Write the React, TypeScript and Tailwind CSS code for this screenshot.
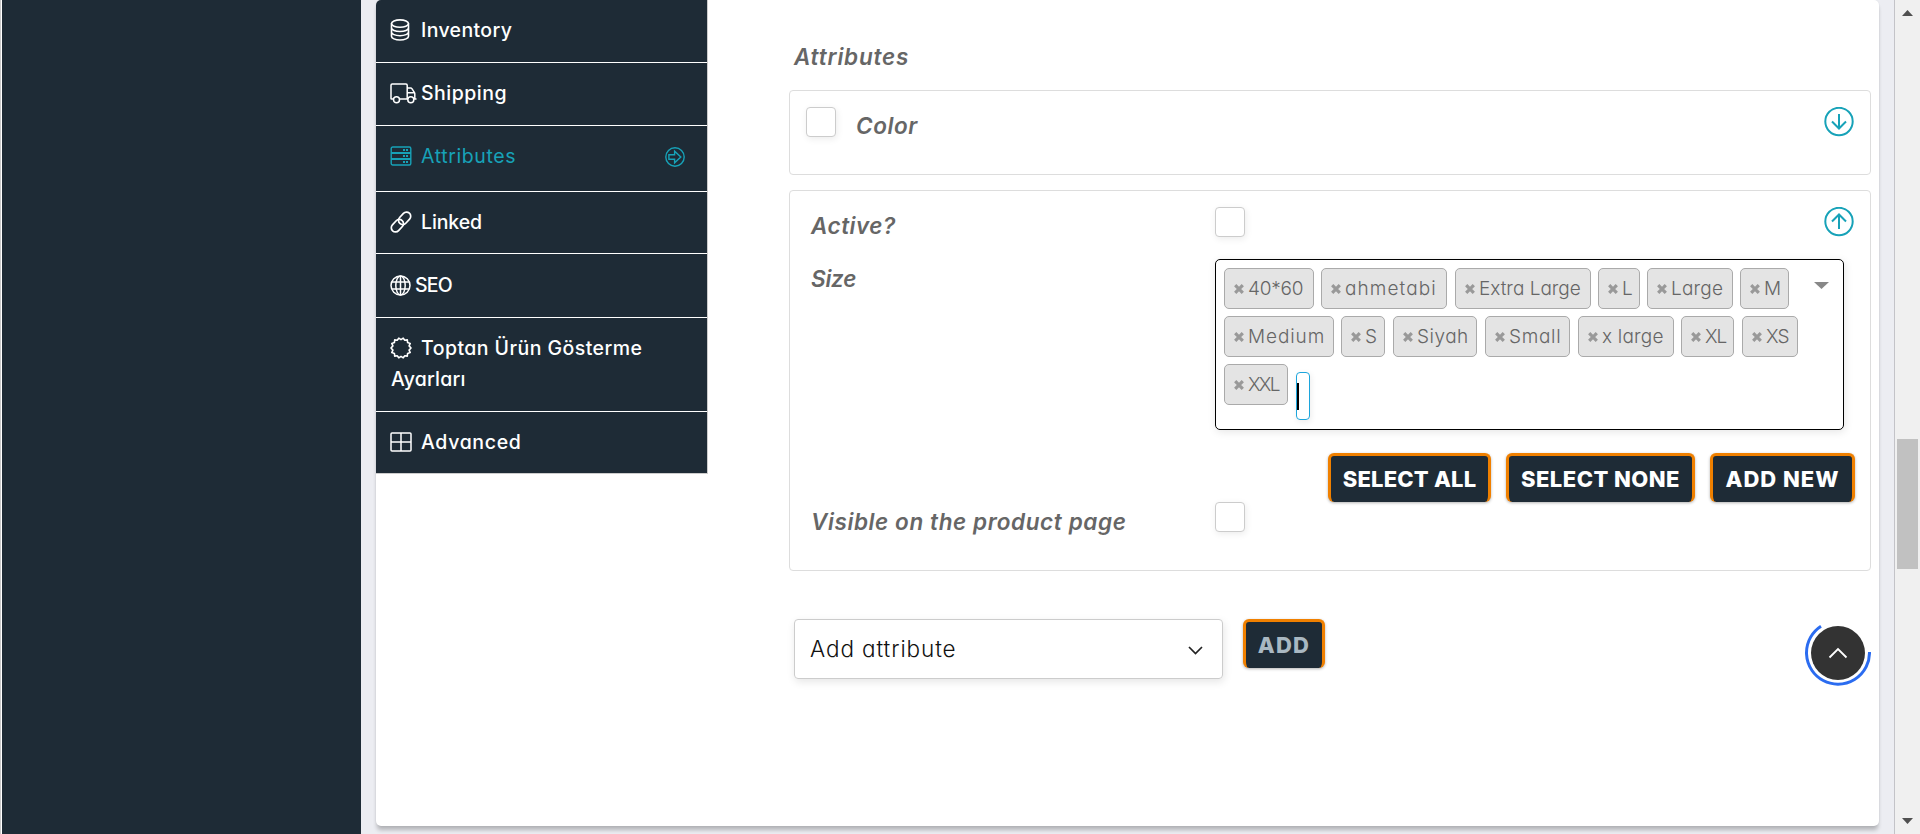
import React from "react";

const icon = "shrink-0 fill-none stroke-current";

function DatabaseIcon() {
  return (
    <svg className={icon} width="20" height="22" viewBox="0 0 20 22" strokeWidth="1.600">
      <ellipse cx="10" cy="4.600" rx="8.500" ry="3.700" />
      <path d="M1.500 4.600v12.600c0 2.100 3.700 3.800 8.500 3.800s8.500-1.700 8.500-3.800v-12.600M1.500 8.800c0 2.100 3.700 3.700 8.500 3.700s8.500-1.600 8.500-3.700M1.500 13c0 2.100 3.700 3.700 8.500 3.700s8.500-1.600 8.500-3.700" />
    </svg>
  );
}

function TruckIcon() {
  return (
    <svg className={icon} width="27" height="21" viewBox="0 0 27 21" strokeWidth="1.500">
      <path d="M3.500 16H1.600C1.200 16 1 15.800 1 15.400V2.200C1 1.500 1.400 1 2.200 1H16c.7 0 1.200.5 1.200 1.200V16H9.500M17.200 5h3.500c.5 0 .9.200 1.200.6l2.600 4c.200.3.300.7.300 1.100V16M17.200 9.700h7.400M23.800 16H26.500" />
      <circle cx="6.500" cy="16.800" r="3" />
      <circle cx="20.800" cy="16.800" r="3" />
    </svg>
  );
}

function ServerIcon() {
  return (
    <svg className={icon} width="22" height="20" viewBox="0 0 22 20" strokeWidth="1.400">
      <rect x="1.200" y="1" width="19.600" height="18" rx="1.500" />
      <path d="M1 7h20M1 13h20" strokeWidth="1.800" />
      <path d="M13 4h2M16 4h2M13 10h2M16 10h2M13 16h2M16 16h2" strokeWidth="2" />
    </svg>
  );
}

function LinkIcon() {
  return (
    <svg className={icon} width="22" height="22" viewBox="0 0 22 22" strokeWidth="1.700">
      <rect x="-7" y="-4.200" width="14" height="8.400" rx="4.200" transform="translate(14.600 7.300) rotate(-47)" />
      <rect x="-7" y="-4.200" width="14" height="8.400" rx="4.200" transform="translate(7.400 14.700) rotate(-47)" />
    </svg>
  );
}

function GlobeIcon() {
  return (
    <svg className={icon} width="21" height="21" viewBox="0 0 21 21" strokeWidth="1.500">
      <circle cx="10.500" cy="10.500" r="9.500" />
      <ellipse cx="10.500" cy="10.500" rx="4.700" ry="9.500" />
      <path d="M10.500 1v19M2 7h17M2 14h17" />
    </svg>
  );
}

function BadgeIcon() {
  return (
    <svg className={icon} width="22" height="22" viewBox="0 0 22 22" strokeWidth="1.600">
      <path d="M11 2.600L13.200 1.200L14.800 3.300L17.300 2.900L17.600 5.600L20.200 6.400L19.100 8.900L21 11L19.100 13.100L20.200 15.600L17.600 16.400L17.300 19.100L14.800 18.700L13.200 20.800L11 19.400L8.800 20.800L7.200 18.700L4.700 19.100L4.400 16.400L1.800 15.600L2.900 13.100L1 11L2.900 8.900L1.800 6.400L4.400 5.600L4.700 2.900L7.200 3.300L8.800 1.200Z" strokeLinejoin="round" />
    </svg>
  );
}

function GridIcon() {
  return (
    <svg className={icon} width="22" height="20" viewBox="0 0 22 20" strokeWidth="1.500">
      <rect x="1" y="1" width="20" height="18" rx="1" />
      <path d="M11 1v18M1 10h20" />
    </svg>
  );
}

function CircleArrowRight() {
  return (
    <svg className={icon} width="20" height="20" viewBox="0 0 20 20" strokeWidth="1.400">
      <circle cx="10" cy="10" r="9.200" />
      <path d="M3.900 7.800H9.600V4.200L15.800 10L9.600 15.800V12.200H3.900Z" />
    </svg>
  );
}

function CircleArrow({ up }: { up?: boolean }) {
  return (
    <svg className="size-[30px] shrink-0 fill-none stroke-[#17a2b8]" viewBox="0 0 30 30" strokeWidth="2">
      <circle cx="15" cy="14.500" r="13.700" />
      <path d={up ? "M15 22V7.500M8 14.500L15 7.500L22 14.500" : "M15 7V21.500M8 14.500L15 21.500L22 14.500"} />
    </svg>
  );
}

type Tab = { label: string; height: string; gap: string; spacing: string; icon: React.ReactNode };

const tabs: Tab[] = [
  { label: "Inventory", height: "h-[62px]", gap: "w-[31px]", spacing: "tracking-[0.35px]", icon: <DatabaseIcon /> },
  { label: "Shipping", height: "h-[62px]", gap: "w-[31px]", spacing: "tracking-[0.5px]", icon: <TruckIcon /> },
  { label: "Attributes", height: "h-[65px]", gap: "w-[31px]", spacing: "tracking-[0.6px]", icon: <ServerIcon /> },
  { label: "Linked", height: "h-[61px]", gap: "w-[31px]", spacing: "tracking-[-0.1px]", icon: <LinkIcon /> },
  { label: "SEO", height: "h-[63px]", gap: "w-[25px]", spacing: "tracking-[-0.8px]", icon: <GlobeIcon /> },
  { label: "Toptan Ürün Gösterme", height: "h-[93px]", gap: "w-[31px]", spacing: "tracking-[0.45px]", icon: <BadgeIcon /> },
  { label: "Advanced", height: "h-[61px]", gap: "w-[31px]", spacing: "tracking-[0.65px]", icon: <GridIcon /> },
];

function TabItem({ tab, last }: { tab: Tab; last: boolean }) {
  const active = tab.label === "Attributes";
  return (
    <li className={`box-content bg-[#1e2b36] ${tab.height} ${last ? "" : "border-b border-white"} ${active ? "text-[#17a2b8]" : "text-white"}`}>
      <div className={`pl-[14px] ${tab.label === "SEO" ? "pt-[16px]" : "pt-[15px]"}`}>
        <div className="flex h-[31px] items-center">
          <span className={`flex shrink-0 items-center pb-[1px] ${tab.gap}`}>{tab.icon}</span>
          <span className={`whitespace-nowrap text-[19.5px] leading-[31px] ${active ? "font-normal" : "font-medium"} ${tab.spacing}`}>{tab.label}</span>
          {active && <span className="mr-[22px] ml-auto pt-[1px]"><CircleArrowRight /></span>}
        </div>
        {tab.label.startsWith("Toptan") && <div className="pl-[1px] text-[19.5px] leading-[31px] font-medium tracking-[0.2px]">Ayarları</div>}
      </div>
    </li>
  );
}

type Tag = { label: string; width: string; spacing: string };
const tagRows: Tag[][] = [
  [
    { label: "40*60", width: "w-[90px]", spacing: "tracking-[-0.2px]" },
    { label: "ahmetabi", width: "ml-[7px] w-[126px]", spacing: "tracking-[1.1px]" },
    { label: "Extra Large", width: "ml-[8px] w-[136px]", spacing: "tracking-[0px]" },
    { label: "L", width: "ml-[7px] w-[42px]", spacing: "tracking-[0px]" },
    { label: "Large", width: "ml-[7px] w-[86px]", spacing: "tracking-[0.2px]" },
    { label: "M", width: "ml-[7px] w-[49px]", spacing: "tracking-[0px]" },
  ],
  [
    { label: "Medium", width: "w-[110px]", spacing: "tracking-[0.9px]" },
    { label: "S", width: "ml-[7px] w-[44px]", spacing: "tracking-[0px]" },
    { label: "Siyah", width: "ml-[8px] w-[84px]", spacing: "tracking-[0.5px]" },
    { label: "Small", width: "ml-[8px] w-[85px]", spacing: "tracking-[0.7px]" },
    { label: "x large", width: "ml-[8px] w-[96px]", spacing: "tracking-[0.2px]" },
    { label: "XL", width: "ml-[7px] w-[53px]", spacing: "tracking-[-1px]" },
    { label: "XS", width: "ml-[8px] w-[56px]", spacing: "tracking-[-1px]" },
  ],
  [{ label: "XXL", width: "w-[64px]", spacing: "tracking-[-1.7px]" }],
];

function TagChip({ tag }: { tag: Tag }) {
  return (
    <span className={`flex h-[41px] shrink-0 items-center rounded-[5px] border border-[#aaa] bg-[#e4e4e4] pl-[9px] ${tag.width}`}>
      <svg className="mr-[4px] size-[10px] shrink-0 stroke-[#999]" viewBox="0 0 10 10" strokeWidth="3.200">
        <path d="M1.200 1.200L8.800 8.800M8.800 1.200L1.200 8.800" />
      </svg>
      <span className={`text-[19px] leading-[28px] font-[360] whitespace-nowrap text-[#666] ${tag.spacing}`}>{tag.label}</span>
    </span>
  );
}

function Checkbox() {
  return <span className="block size-[30px] shrink-0 rounded-[4px] border border-[#ccc] bg-white shadow-[1px_2px_7px_rgba(0,0,0,0.08)]" />;
}

function DarkButton({ label, className }: { label: string; className: string }) {
  return (
    <button className={`flex h-[49px] shrink-0 items-center justify-center rounded-[6px] border-x-[3px] border-t-[3px] border-[#f08000] bg-[#1e2b36] pt-[1px] text-[22px] font-extrabold whitespace-nowrap shadow-[0_1px_3px_rgba(0,0,0,0.3)] ${className}`}>
      {label}
    </button>
  );
}

const heading = "block pt-[1px] text-[22.5px] leading-[29px] font-semibold italic whitespace-nowrap text-[#666]";

export default function App() {
  return (
    <div className="flex h-[834px] w-[1920px] overflow-hidden bg-[#ecedf2] font-['Inter',sans-serif] [font-feature-settings:'cv11','calt'_0]">
      <div className="w-[2px] shrink-0 border-l border-[#c9c9c9] bg-white" />
      <aside className="w-[359px] shrink-0 bg-[#1e2b36]" />
      <main className="ml-[15px] flex h-[826px] w-[1503px] shrink-0 overflow-hidden rounded-[5px] bg-white shadow-[0_5px_4px_-1px_rgba(0,0,0,0.24),0_0_2px_rgba(0,0,0,0.08)]">
        <ul className="h-[474px] w-[332px] shrink-0 border-r border-b border-[#ccc]">
          {tabs.map((t, i) => <TabItem key={t.label} tab={t} last={i === tabs.length - 1} />)}
        </ul>
        <section className="ml-[81px] w-[1082px] shrink-0">
          <h3 className={`${heading} mt-[41px] ml-[5px] tracking-[0.8px]`}>Attributes</h3>
          <div className="mt-[19px] flex h-[85px] items-start rounded-[4px] border border-[#ddd] pt-[16px] pr-[16px] pl-[16px]">
            <Checkbox />
            <span className={`${heading} mt-[3px] ml-[20px] tracking-[0.6px]`}>Color</span>
            <span className="ml-auto"><CircleArrow /></span>
          </div>
          <div className="mt-[15px] h-[381px] rounded-[4px] border border-[#ddd] pt-[16px]">
            <div className="flex h-[52px] items-start pr-[16px] pl-[21px]">
              <span className={`${heading} mt-[3px] w-[404px] tracking-[0.5px]`}>Active?</span>
              <Checkbox />
              <span className="ml-auto"><CircleArrow up /></span>
            </div>
            <div className="flex h-[194px] items-start pl-[21px]">
              <span className={`${heading} mt-[4px] w-[404px] tracking-[-0.2px]`}>Size</span>
              <div className="flex h-[171px] w-[629px] justify-between rounded-[5px] border border-black bg-white pt-[8px] pl-[8px] shadow-[1px_2px_8px_rgba(0,0,0,0.1)]">
                <div className="flex flex-col gap-[7px]">
                  {tagRows.map((row, i) => (
                    <div key={i} className="flex">
                      {row.map((t) => <TagChip key={t.label} tag={t} />)}
                      {i === 2 && (
                        <span className="mt-[8px] ml-[8px] flex h-[48px] w-[14px] items-center rounded-[4px] border border-[#1ca5dc] shadow-[1px_2px_6px_rgba(0,0,0,0.08)]">
                          <span className="h-[27px] w-[2px] bg-black" />
                        </span>
                      )}
                    </div>
                  ))}
                </div>
                <svg className="mt-[14px] mr-[14px] h-[7px] w-[15px] fill-[#888]" viewBox="0 0 15 7"><path d="M0 0H15L7.500 7Z" /></svg>
              </div>
            </div>
            <div className="flex h-[49px] justify-end pr-[15px]">
              <DarkButton label="SELECT ALL" className="w-[163px] text-white tracking-[0.2px]" />
              <DarkButton label="SELECT NONE" className="ml-[15px] w-[189px] text-white tracking-[0.45px]" />
              <DarkButton label="ADD NEW" className="ml-[15px] w-[145px] text-white tracking-[1px]" />
            </div>
            <div className="flex items-start pl-[21px]">
              <span className={`${heading} mt-[4px] w-[404px] tracking-[0.6px]`}>Visible on the product page</span>
              <Checkbox />
            </div>
          </div>
          <div className="mt-[48px] flex items-start pl-[5px]">
            <div className="flex h-[60px] w-[429px] items-center justify-between rounded-[4px] border border-[#ccc] pr-[19px] pl-[15px] shadow-[1px_3px_8px_rgba(0,0,0,0.1)]">
              <span className="pb-[1px] text-[22.5px] font-[350] whitespace-nowrap text-[#111] tracking-[0.9px]">Add attribute</span>
              <svg className="mt-[2px] h-[9px] w-[15px] fill-none stroke-[#222]" viewBox="0 0 15 9" strokeWidth="1.700"><path d="M1 1L7.500 7.500L14 1" /></svg>
            </div>
            <DarkButton label="ADD" className="ml-[20px] w-[82px] text-[#a9b8c2] tracking-[1.2px]" />
          </div>
        </section>
      </main>
      <div className="ml-[15px] flex w-[26px] shrink-0 flex-col items-center border-l border-[#c3c3c8] bg-[#f0f0f0] pt-[10px]">
        <svg className="h-[6px] w-[11px] fill-[#505050]" viewBox="0 0 11 6"><path d="M0 6L5.500 0L11 6Z" /></svg>
        <div className="mt-[423px] h-[130px] w-[21px] bg-[#c1c1c1]" />
        <svg className="mt-[249px] h-[6px] w-[11px] fill-[#505050]" viewBox="0 0 11 6"><path d="M0 0L5.500 6L11 0Z" /></svg>
      </div>
      <button className="absolute top-[620px] left-[1805px] size-[66px]">
        <svg className="fill-none" width="66" height="66" viewBox="0 0 66 66">
          <circle cx="33" cy="33" r="27" className="fill-[#333]" />
          <path d="M64.500 32A31.500 31.500 0 1 1 16 6.200" className="stroke-[#2b6cf0]" strokeWidth="3" />
          <path d="M24.500 37.500L33 29L41.500 37.500" className="stroke-white" strokeWidth="1.800" />
        </svg>
      </button>
    </div>
  );
}
